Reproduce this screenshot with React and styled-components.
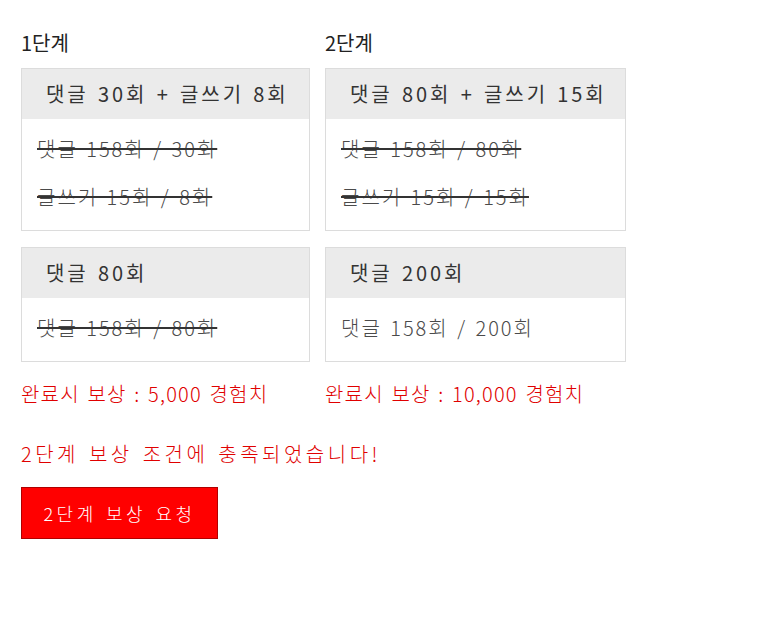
import React from 'react'
import styled, { createGlobalStyle } from 'styled-components'

const GlobalStyle = createGlobalStyle`
  body {
    margin: 0;
    background: #fff;
    font-family: 'Noto Sans CJK KR', 'Noto Sans', sans-serif;
    color: #333;
  }
`

const stages = [
  {
    title: '1단계',
    width: 289,
    quests: [
      {
        goal: '댓글 30회 + 글쓰기 8회',
        progress: [
          { text: '댓글 158회 / 30회', done: true },
          { text: '글쓰기 15회 / 8회', done: true },
        ],
      },
      {
        goal: '댓글 80회',
        progress: [{ text: '댓글 158회 / 80회', done: true }],
      },
    ],
    reward: '완료시 보상 : 5,000 경험치',
  },
  {
    title: '2단계',
    width: 301,
    quests: [
      {
        goal: '댓글 80회 + 글쓰기 15회',
        progress: [
          { text: '댓글 158회 / 80회', done: true },
          { text: '글쓰기 15회 / 15회', done: true },
        ],
      },
      {
        goal: '댓글 200회',
        progress: [{ text: '댓글 158회 / 200회', done: false }],
      },
    ],
    reward: '완료시 보상 : 10,000 경험치',
  },
]

const App = () => (
  <>
    <GlobalStyle />
    <Page>
      <Stages>
        {stages.map(stage => (
          <Stage key={stage.title} width={stage.width}>
            <StageTitle>{stage.title}</StageTitle>
            {stage.quests.map(quest => (
              <Quest key={quest.goal}>
                <Goal>{quest.goal}</Goal>
                <Progress>
                  {quest.progress.map(p => (
                    <Line key={p.text} done={p.done}>
                      {p.text}
                    </Line>
                  ))}
                </Progress>
              </Quest>
            ))}
            <Reward>{stage.reward}</Reward>
          </Stage>
        ))}
      </Stages>
      <Notice>2단계 보상 조건에 충족되었습니다!</Notice>
      <RequestButton>2단계 보상 요청</RequestButton>
    </Page>
  </>
)

export default App

const Page = styled.div`
  padding: 30px 21px;
  font-size: 20px;
  letter-spacing: 2px;
  word-spacing: 0.1em;
`

const Stages = styled.div`
  display: flex;
  align-items: flex-start;
  gap: 15px;
`

const Stage = styled.section`
  width: ${({ width }) => width}px;
  display: flex;
  flex-direction: column;
`

const StageTitle = styled.h3`
  margin: 0 0 12px;
  font-size: 20px;
  font-weight: normal;
  line-height: 26px;
  letter-spacing: 0;
  color: #222;
`

const Quest = styled.div`
  border: 1px solid #dcdcdc;
  margin-bottom: 16px;
`

const Goal = styled.div`
  height: 50px;
  line-height: 50px;
  padding-left: 24px;
  background: #ebebeb;
  color: #333;
  letter-spacing: 2.9px;
  white-space: nowrap;
`

const Progress = styled.div`
  padding: 6px 15px 9px;
`

const Line = styled.p`
  margin: 0;
  line-height: 48px;
  font-weight: 300;
  color: #4a4a4a;
  white-space: nowrap;
  text-decoration: ${({ done }) => (done ? 'line-through' : 'none')};
  text-decoration-thickness: 2px;
  text-decoration-color: #333;
`

const Reward = styled.p`
  margin: 1px 0 0;
  line-height: 30px;
  font-weight: 300;
  letter-spacing: 1.2px;
  color: #e00000;
  white-space: nowrap;
`

const Notice = styled.p`
  margin: 30px 0 0;
  line-height: 30px;
  font-weight: 300;
  letter-spacing: 3.5px;
  color: #e00000;
`

const RequestButton = styled.button`
  margin-top: 18px;
  width: 197px;
  height: 52px;
  background: #ff0000;
  border: 1px solid #b00000;
  color: #fff;
  font-family: inherit;
  font-size: 18px;
  font-weight: 300;
  letter-spacing: 3.5px;
  word-spacing: 0.1em;
  cursor: pointer;
`
